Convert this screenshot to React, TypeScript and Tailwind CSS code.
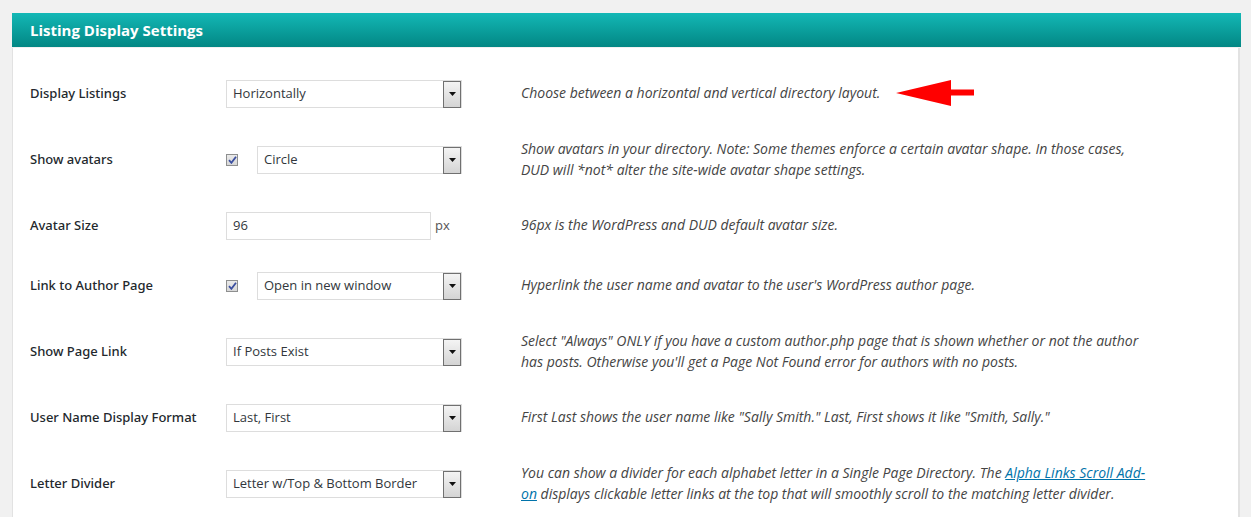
import React from 'react';

const font = { fontFamily: '"Open Sans", "Noto Sans", sans-serif' };
const labelFont = { fontFamily: '"Noto Sans", "Open Sans", sans-serif' };

const Arrow: React.FC = () => (
  <span className="flex h-full w-[18px] items-center justify-center border border-[#707070] bg-gradient-to-b from-[#f4f4f4] to-[#d4d4d4]">
    <svg width="7" height="4" viewBox="0 0 7 4">
      <path d="M0 0h7L3.5 4z" fill="#111" />
    </svg>
  </span>
);

const Select: React.FC<{ value: string; width: string }> = ({ value, width }) => (
  <div className={`flex h-[28px] items-center border border-[#dddddd] bg-white pl-[6px] ${width}`}>
    <span className="flex-1 text-[13px] text-[#32373c]">{value}</span>
    <div className="h-[27px] py-0">
      <Arrow />
    </div>
  </div>
);

const Check: React.FC = () => (
  <span className="flex h-[12px] w-[12px] items-center justify-center border border-[#8e8f8f] bg-gradient-to-b from-[#eaeaea] to-[#d8d8d8]">
    <svg width="9" height="8" viewBox="0 0 9 8">
      <path d="M1 4.2L3.4 6.8L8 0.8" fill="none" stroke="#3b4fa0" strokeWidth="1.8" />
    </svg>
  </span>
);

interface Row {
  label: string;
  control: React.ReactNode;
  desc: React.ReactNode;
  tall?: boolean;
}

const rows: Row[] = [
  {
    label: 'Display Listings',
    control: <Select value="Horizontally" width="w-[236px]" />,
    desc: (
      <div className="flex items-center">
        <span>Choose between a horizontal and vertical directory layout.</span>
        <svg width="80" height="28" viewBox="0 0 80 28" className="ml-[16px]">
          <path d="M0 14L55 1V10.5H78V16.5H55V27z" fill="#ff0000" />
        </svg>
      </div>
    ),
  },
  {
    label: 'Show avatars',
    control: (
      <div className="flex items-center">
        <Check />
        <div className="ml-[19px]">
          <Select value="Circle" width="w-[205px]" />
        </div>
      </div>
    ),
    desc: (
      <>
        Show avatars in your directory. Note: Some themes enforce a certain avatar shape. In those cases,
        <br />
        DUD will *not* alter the site-wide avatar shape settings.
      </>
    ),
    tall: true,
  },
  {
    label: 'Avatar Size',
    control: (
      <div className="flex items-center">
        <div className="flex h-[28px] w-[205px] items-center border border-[#dddddd] bg-white pl-[6px] text-[13px] text-[#32373c]">
          96
        </div>
        <span className="ml-[4px] text-[13px] text-[#555]">px</span>
      </div>
    ),
    desc: <>96px is the WordPress and DUD default avatar size.</>,
  },
  {
    label: 'Link to Author Page',
    control: (
      <div className="flex items-center">
        <Check />
        <div className="ml-[19px]">
          <Select value="Open in new window" width="w-[205px]" />
        </div>
      </div>
    ),
    desc: <>Hyperlink the user name and avatar to the user's WordPress author page.</>,
  },
  {
    label: 'Show Page Link',
    control: <Select value="If Posts Exist" width="w-[236px]" />,
    desc: (
      <>
        Select "Always" ONLY if you have a custom author.php page that is shown whether or not the author
        <br />
        has posts. Otherwise you'll get a Page Not Found error for authors with no posts.
      </>
    ),
    tall: true,
  },
  {
    label: 'User Name Display Format',
    control: <Select value="Last, First" width="w-[236px]" />,
    desc: <>First Last shows the user name like "Sally Smith." Last, First shows it like "Smith, Sally."</>,
  },
  {
    label: 'Letter Divider',
    control: <Select value="Letter w/Top & Bottom Border" width="w-[236px]" />,
    desc: (
      <>
        You can show a divider for each alphabet letter in a Single Page Directory. The{' '}
        <a className="text-[#0073aa] underline">Alpha Links Scroll Add-</a>
        <br />
        <a className="text-[#0073aa] underline">on</a> displays clickable letter links at the top that will smoothly scroll to the matching letter divider.
      </>
    ),
    tall: true,
  },
];

export default function App() {
  return (
    <div className="h-[517px] w-[1251px] overflow-hidden bg-[#f1f1f1] pl-[12px] pt-[13px]" style={font}>
      <div className="w-[1229px]">
        <div className="flex h-[34px] items-center bg-gradient-to-b from-[#13b8b6] to-[#038784] pl-[18px]">
          <h2 className="text-[15px] font-bold text-white">Listing Display Settings</h2>
        </div>
        <div className="mt-[1px] mr-[1px] border-l border-r-2 border-[#e2e2e2] bg-white pt-[16px]">
          {rows.map((row) => (
            <div key={row.label} className={`flex items-center ${row.tall ? 'h-[72px]' : 'h-[60px]'}`}>
              <div className="w-[213px] pl-[17px] text-[13px] font-medium text-[#23282d]" style={labelFont}>
                {row.label}
              </div>
              <div className="w-[295px]">{row.control}</div>
              <div className="flex-1 whitespace-nowrap pb-[3px] text-[14px] italic leading-[21px] text-[#444]">{row.desc}</div>
            </div>
          ))}
        </div>
      </div>
    </div>
  );
}
